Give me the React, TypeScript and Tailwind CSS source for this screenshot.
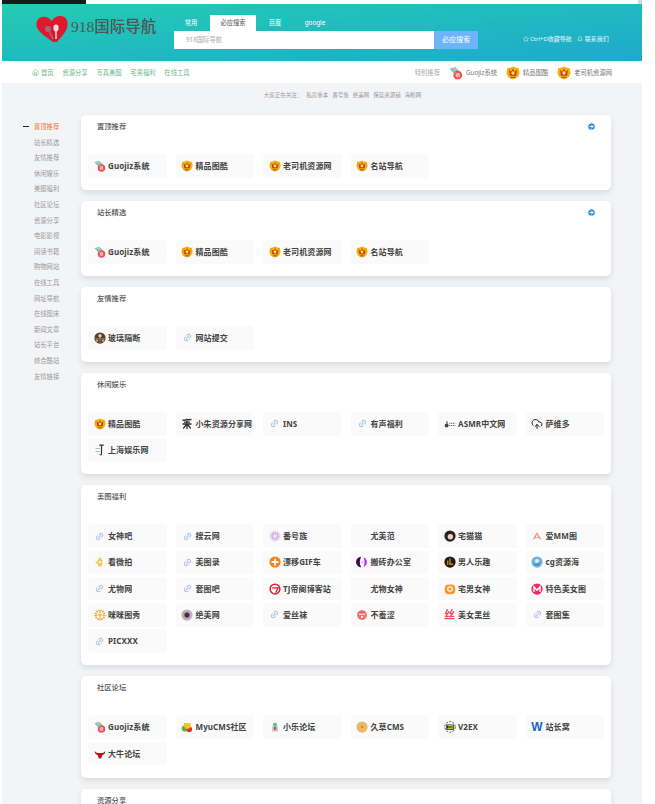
import { CircleArrowUp, CloudUpload, House, Link2, Star, Bell } from "lucide-react";

type Tile = [string, string];

const sideItems = ["置顶推荐", "站长精选", "友情推荐", "休闲娱乐", "美图福利", "社区论坛", "资源分享", "电影影视", "阅读书籍", "购物网站", "在线工具", "网址导航", "在线图床", "新闻文章", "站长平台", "综合酷站", "友情链接"];

const topPicks: Tile[] = [["guojiz", "Guojiz系统"], ["crown", "精品图酷"], ["crown", "老司机资源网"], ["crown", "名站导航"]];

const sections: { title: string; more?: boolean; tiles: Tile[] }[] = [
  { title: "置顶推荐", more: true, tiles: topPicks },
  { title: "站长精选", more: true, tiles: topPicks },
  { title: "友情推荐", tiles: [["glass", "玻璃隔断"], ["link", "网站提交"]] },
  {
    title: "休闲娱乐",
    tiles: [["crown", "精品图酷"], ["ink", "小朱资源分享网"], ["link", "INS"], ["link", "有声福利"], ["asmr", "ASMR中文网"], ["cloud", "萨维多"], ["shanghai", "上海娱乐网"]],
  },
  {
    title: "美图福利",
    tiles: [
      ["link", "女神吧"], ["link", "搜云网"], ["fanhao", "番号族"], ["none", "尤美范"], ["cat", "宅猫猫"], ["aimm", "爱MM图"],
      ["hand", "看微拍"], ["link", "美图录"], ["plus", "漂移GIF车"], ["moon", "搬砖办公室"], ["man", "男人乐趣"], ["cg", "cg资源海"],
      ["link", "尤物网"], ["link", "套图吧"], ["tj", "TJ帝阁博客站"], ["none", "尤物女神"], ["qq", "宅男女神"], ["mm", "特色美女图"],
      ["lattice", "咪咪图秀"], ["jue", "绝美网"], ["link", "爱丝袜"], ["shy", "不羞涩"], ["si", "美女黑丝"], ["link", "套图集"],
      ["link", "PICXXX"],
    ],
  },
  {
    title: "社区论坛",
    tiles: [["guojiz", "Guojiz系统"], ["myu", "MyuCMS社区"], ["xiaole", "小乐论坛"], ["jiucao", "久草CMS"], ["v2ex", "V2EX"], ["wo", "站长窝"], ["bull", "大牛论坛"]],
  },
  { title: "资源分享", tiles: [["link", "资源网"]] },
];

function SiteIcon({ name, size = 12 }: { name: string; size?: number }) {
  const box = { width: size, height: size, viewBox: "0 0 16 16" };
  switch (name) {
    case "guojiz":
      return (
        <svg {...box}>
          <path d="M0.5 3 L7 1 L12 6 L7 10 Z" fill="#74c6dc" />
          <path d="M3 2.5 L7 2 L8.5 5 Z" fill="#f2c14e" />
          <circle cx="10" cy="10.5" r="5" fill="#ee4d6a" />
          <circle cx="10" cy="10.5" r="2.4" fill="#fbd7dd" />
          <path d="M6.5 6.5 L12.5 13.5" stroke="#f59a23" strokeWidth="1.4" />
        </svg>
      );
    case "crown":
      return (
        <svg {...box}>
          <path d="M8 0.5 L11 2 L14.5 2.5 L15.5 8 L13.5 12.5 L8 15.5 L2.5 12.5 L0.5 8 L1.5 2.5 L5 2 Z" fill="#f2ae0c" />
          <path d="M3.5 4.5 L6 6.5 L8 3 L10 6.5 L12.5 4.5 L11.5 11 H4.5 Z" fill="#c2410a" />
          <circle cx="8" cy="8" r="1.9" fill="#fde29a" />
          <path d="M5 13.5 Q8 12 11 13.5" stroke="#8a4b05" strokeWidth="1" fill="none" />
        </svg>
      );
    case "glass":
      return (
        <svg {...box}>
          <circle cx="8" cy="8" r="7.5" fill="#5b4029" />
          <path d="M0.5 9 H15.5 M8 5 V15" stroke="#a88d6d" strokeWidth="1" />
          <circle cx="8" cy="5" r="2.2" fill="#e5d5bf" />
          <circle cx="4" cy="11.5" r="1.5" fill="#c9b08f" />
          <circle cx="12" cy="11.5" r="1.5" fill="#c9b08f" />
        </svg>
      );
    case "link":
      return <Link2 size={size - 3} strokeWidth={2.8} className="-rotate-45 text-[#a9bfe8]" />;
    case "ink":
      return (
        <svg {...box}>
          <path d="M2 3 L14 2 M8 1 V15 M2 8 H14 M3 14 L7 9 M13 14 L9 9 M4 5.5 H12" stroke="#333" strokeWidth="1.7" fill="none" />
        </svg>
      );
    case "asmr":
      return (
        <svg {...box}>
          <circle cx="3.5" cy="10" r="2.6" fill="#444" />
          <path d="M4 4 V12" stroke="#444" strokeWidth="1.2" />
          <path d="M7 7 H15 M7 10 H15" stroke="#666" strokeWidth="1.3" strokeDasharray="1.6 0.8" />
        </svg>
      );
    case "cloud":
      return <CloudUpload size={size} strokeWidth={2} className="text-[#222]" />;
    case "shanghai":
      return (
        <svg {...box}>
          <path d="M2 6 H8 M2 10 H8" stroke="#bbb" strokeWidth="1.5" />
          <path d="M7 1.5 H13 M10 1.5 V13 Q10 15 7.5 14" stroke="#333" strokeWidth="1.6" fill="none" />
        </svg>
      );
    case "fanhao":
      return (
        <svg {...box}>
          <circle cx="8" cy="8" r="7.5" fill="#eadcf3" />
          <circle cx="8" cy="8" r="4" fill="none" stroke="#b58fd2" strokeWidth="1.6" strokeDasharray="2 1" />
        </svg>
      );
    case "cat":
      return (
        <svg {...box}>
          <circle cx="8" cy="8" r="7.5" fill="#2a2226" />
          <circle cx="8.5" cy="9" r="3.6" fill="#f0cfc4" />
        </svg>
      );
    case "aimm":
      return (
        <svg {...box}>
          <path d="M8 3 L14 13 L8 10 L2 13 Z" fill="#f5916e" />
          <path d="M8 6 L10 10 L8 9 L6 10 Z" fill="#fff" />
        </svg>
      );
    case "hand":
      return (
        <svg {...box}>
          <path d="M8 1 L11.5 6 L11 12 L8 15 L5 12 L4.5 6 Z" fill="#f7c65b" />
          <path d="M4 8 L1.5 6.5 L4.5 11 Z" fill="#f5a73b" />
          <circle cx="8" cy="8" r="1.6" fill="#fff2c8" />
        </svg>
      );
    case "plus":
      return (
        <svg {...box}>
          <circle cx="8" cy="8" r="7.5" fill="#f58220" />
          <path d="M8 3.5 V12.5 M3.5 8 H12.5" stroke="#fff" strokeWidth="2.4" />
        </svg>
      );
    case "moon":
      return (
        <svg {...box}>
          <path d="M7 1 A7 7 0 1 0 7 15 Q3 8 7 1 Z" fill="#3b0a52" />
          <path d="M10 1.5 A7 7 0 0 1 10 14.5 Q13 8 10 1.5 Z" fill="#b321e0" />
          <circle cx="8.4" cy="8" r="1.6" fill="#e9b8f5" />
        </svg>
      );
    case "man":
      return (
        <svg {...box}>
          <circle cx="8" cy="8" r="7.5" fill="#1d1b19" />
          <path d="M8 3 V11 H12 M5 6 V12" stroke="#d9891f" strokeWidth="1.7" fill="none" />
        </svg>
      );
    case "cg":
      return (
        <svg {...box}>
          <circle cx="8" cy="8" r="7.5" fill="#74b4dc" />
          <path d="M3 9 Q8 15 13 6 Q12 12 8 13 Q4 13 3 9 Z" fill="#2f7fb8" />
          <circle cx="8" cy="6.5" r="2.6" fill="#dff0fa" />
        </svg>
      );
    case "tj":
      return (
        <svg {...box}>
          <circle cx="8" cy="8" r="6.5" fill="#fff" stroke="#d9232e" strokeWidth="2" />
          <path d="M4 6.5 H12 L9 13" stroke="#d9232e" strokeWidth="1.8" fill="none" />
        </svg>
      );
    case "qq":
      return (
        <svg {...box}>
          <rect x="1" y="2" width="14" height="13" rx="5" fill="#f59a2e" />
          <circle cx="8" cy="8" r="3" fill="none" stroke="#fff" strokeWidth="1.4" />
        </svg>
      );
    case "mm":
      return (
        <svg {...box}>
          <circle cx="8" cy="8" r="7.5" fill="#ee2a6b" />
          <path d="M4 12 V5 L8 9.5 L12 5 V12" stroke="#fff" strokeWidth="1.8" fill="none" />
        </svg>
      );
    case "lattice":
      return (
        <svg {...box}>
          <circle cx="8" cy="8" r="6" fill="none" stroke="#f7a31c" strokeWidth="3" strokeDasharray="1.6 1.2" />
          <path d="M3 8 H13 M8 3 V13" stroke="#f7a31c" strokeWidth="1.2" />
        </svg>
      );
    case "jue":
      return (
        <svg {...box}>
          <circle cx="8" cy="8" r="7.5" fill="#c9a6e8" />
          <circle cx="7" cy="8" r="5.5" fill="#9fc56c" />
          <circle cx="8" cy="8" r="3.4" fill="#5a1d6e" />
        </svg>
      );
    case "shy":
      return (
        <svg {...box}>
          <circle cx="8" cy="8" r="6.5" fill="#f46a6a" />
          <path d="M4 7 H12" stroke="#fff" strokeWidth="1.6" />
          <circle cx="8" cy="10.5" r="1.5" fill="#fff" />
        </svg>
      );
    case "si":
      return <span className="text-[11px] leading-none font-bold text-[#f0485c]">丝</span>;
    case "myu":
      return (
        <svg {...box}>
          <circle cx="5" cy="10" r="4" fill="#5fae45" />
          <circle cx="11" cy="11" r="3.8" fill="#d8352f" />
          <path d="M4 2.5 L13 3 L12.5 9 L8 11 L4 8 Z" fill="#f6c21c" />
        </svg>
      );
    case "xiaole":
      return (
        <svg {...box}>
          <rect x="4" y="7" width="8" height="7" fill="#f4b8b0" />
          <circle cx="8" cy="5" r="2.8" fill="#67b5a8" />
          <rect x="6.5" y="8" width="3" height="4" fill="#3d8f9e" />
        </svg>
      );
    case "jiucao":
      return (
        <svg {...box}>
          <circle cx="8" cy="8" r="7.5" fill="#e9b86b" />
          <path d="M11 3.5 A5.5 5.5 0 1 1 4 12 A4.5 4.5 0 0 0 11 3.5 Z" fill="#fff3d8" />
          <circle cx="8" cy="8" r="1.6" fill="#c98a2c" />
        </svg>
      );
    case "v2ex":
      return (
        <svg {...box}>
          <circle cx="8" cy="8" r="7" fill="#fff" stroke="#333" strokeWidth="1" strokeDasharray="3 1.4" />
          <path d="M3 4.5 H13 V11.5 H3 Z" fill="#1c1c1c" />
          <path d="M4.5 6 H11 V10 H4.5 M5 8 H10.5" stroke="#a3d12a" strokeWidth="1.5" fill="none" />
        </svg>
      );
    case "wo":
      return <span className="text-[12px] leading-none font-black text-[#1565c8] font-['Liberation_Sans',sans-serif]">W</span>;
    case "bull":
      return (
        <svg {...box}>
          <path d="M1 4 Q3 7 6 6.5 H10 Q13 7 15 4 Q15 8.5 11.5 9 L9.5 14 H6.5 L4.5 9 Q1 8.5 1 4 Z" fill="#c4161c" />
          <circle cx="6.4" cy="8.6" r="0.7" fill="#222" />
          <circle cx="9.6" cy="8.6" r="0.7" fill="#222" />
        </svg>
      );
    default:
      return null;
  }
}

function Section({ title, more, tiles }: { title: string; more?: boolean; tiles: Tile[] }) {
  return (
    <section className="rounded-[5px] bg-white px-[7px] pb-[12.5px] shadow-[0_3px_6px_rgba(0,0,0,0.1)]">
      <div className="flex h-[39px] items-start justify-between pl-[9px] pr-[8px] pt-[6px]">
        <h3 className="text-[7.3px] leading-[10px] font-medium text-[#555]">{title}</h3>
        {more && <CircleArrowUp size={9} strokeWidth={2.5} className="mt-[1px] rotate-90 fill-[#2a8fe6] text-white" />}
      </div>
      <div className="grid grid-cols-6 gap-x-[9px] gap-y-[2.8px]">
        {tiles.map(([icon, label], i) => (
          <div key={i} className="flex h-[23.5px] items-center overflow-hidden rounded-[3px] bg-[#fafafa]">
            <span className="flex w-[20px] shrink-0 items-center justify-center pl-[3px]">
              <SiteIcon name={icon} />
            </span>
            <span className="whitespace-nowrap text-[8px] font-bold tracking-[0.1px] text-[#444]">{label}</span>
          </div>
        ))}
      </div>
    </section>
  );
}

export default function App() {
  return (
    <div className="h-[804px] w-[655px] overflow-hidden bg-white font-['Noto_Sans','Noto_Sans_CJK_SC',sans-serif]">
      <div className="ml-[2px] w-[640px]">
        {/* strip of the page above, cut off by the capture */}
        <div className="flex h-[4px] justify-between">
          <div className="h-full w-[84px] bg-[#1a1a1a]" />
          <div className="h-full w-[4px] bg-[#d8d8d8]" />
        </div>

        <header className="flex h-[57px] bg-gradient-to-br from-[#26cbb0] to-[#1fa9cd] pl-[34px]">
          <div className="flex h-[44px] w-[138px] items-center">
            <svg width="32" height="28" viewBox="0 0 32 28" className="mt-[5px] shrink-0">
              <path d="M15.5 6 C12 0 1 0 0.5 9 C0 16 9 21 17 27 L21 27 C27 20 32 15 31.5 8 C31 -1 20 -1 15.5 6 Z" fill="#e0182d" />
              <circle cx="12" cy="14" r="3" fill="#9c6f72" />
              <path d="M12 14 L17 24" stroke="#9c6f72" strokeWidth="1.5" />
              <ellipse cx="20" cy="13" rx="2.6" ry="3.4" fill="#fbd9dc" />
              <path d="M20 14 L20 24" stroke="#fbd9dc" strokeWidth="1.5" />
            </svg>
            <span className="ml-[3px] mt-[1px] whitespace-nowrap font-['Liberation_Serif','Noto_Sans_CJK_SC',serif] text-[15.5px] font-medium text-[#4f5555]">
              918国际导航
            </span>
          </div>

          <div className="w-[304px] pt-[11px]">
            <div className="flex h-[16px] items-center gap-[2px] text-[6.3px] text-white">
              <span className="w-[34px] text-center">常用</span>
              <span className="flex h-full w-[46px] items-center justify-center bg-white text-[#555]">必应搜索</span>
              <span className="w-[34px] text-center">百度</span>
              <span className="w-[42px] text-center">google</span>
            </div>
            <div className="flex h-[18px]">
              <div className="flex flex-1 items-center bg-white pl-[12px] text-[6.3px] text-[#aaa]">918国际导航</div>
              <div className="flex w-[44px] items-center justify-center bg-[#6bb5f8] text-[7px] text-white">必应搜索</div>
            </div>
          </div>

          <div className="ml-[45px] mt-[29px] flex h-[12px] items-center whitespace-nowrap text-[6px] text-white/90">
            <Star size={6} className="mr-[1px]" />
            <span>Ctrl+D收藏导航</span>
            <Bell size={6} className="ml-[5px] mr-[2px]" />
            <span>联系我们</span>
          </div>
        </header>

        <nav className="mt-[1px] flex h-[21px] items-center justify-between bg-white pl-[30px] pr-[30px] text-[6.3px]">
          <div className="flex items-center gap-[8.8px] text-[#6cb88c]">
            <span className="flex items-center gap-[2px]">
              <House size={7} />
              首页
            </span>
            <span>资源分享</span>
            <span>写真美图</span>
            <span>宅男福利</span>
            <span>在线工具</span>
          </div>
          <div className="flex items-center text-[#777]">
            <span className="mr-[9px] text-[#aaa]">特别推荐</span>
            <SiteIcon name="guojiz" size={14} />
            <span className="ml-[3px] mr-[9px]">Guojiz系统</span>
            <SiteIcon name="crown" size={14} />
            <span className="ml-[3px] mr-[9px]">精品图酷</span>
            <SiteIcon name="crown" size={14} />
            <span className="ml-[3px]">老司机资源网</span>
          </div>
        </nav>

        <div className="bg-[#f3f4f6]">
          <div className="flex h-[32px] items-start justify-center gap-[4px] pl-[41px] pt-[8px] text-[5.5px] leading-[8px] text-[#999]">
            <span>大家正在关注：</span>
            <span>私房重本</span>
            <span>番号族</span>
            <span>绝美网</span>
            <span>保蓝资源铺</span>
            <span>海粉网</span>
          </div>

          <div className="flex">
            <aside className="w-[79px] shrink-0 pt-[4px] text-[6.3px] text-[#999]">
              {sideItems.map((item, i) => (
                <div key={item} className="flex h-[15.6px] items-center">
                  {i === 0 && <span className="ml-[21px] mr-[5px] h-[1px] w-[6px] bg-[#222]" />}
                  <span className={i === 0 ? "text-[#f5793b]" : "ml-[32px]"}>{item}</span>
                </div>
              ))}
            </aside>
            <main className="flex w-[530px] flex-col gap-[11px]">
              {sections.map((s) => (
                <Section key={s.title} {...s} />
              ))}
            </main>
          </div>
        </div>
      </div>
    </div>
  );
}
